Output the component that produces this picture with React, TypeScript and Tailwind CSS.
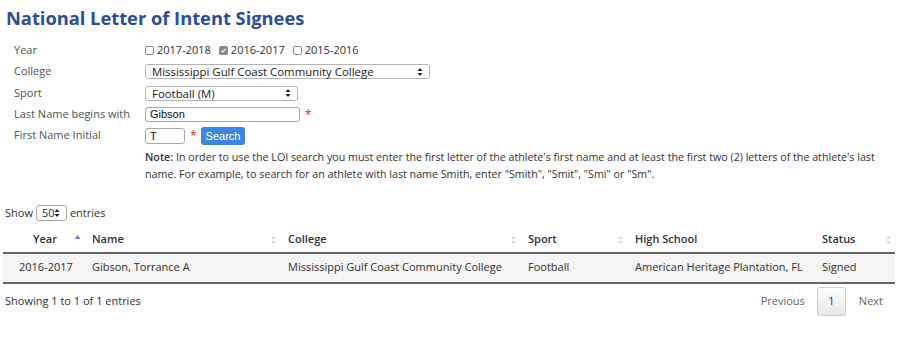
import React from 'react';

const font = { fontFamily: '"Open Sans", "Liberation Sans", sans-serif' };

function SortIcon({ dir }: { dir?: 'asc' }) {
  if (dir === 'asc') {
    return (
      <svg width="7" height="10" viewBox="0 0 7 10" className="absolute right-[3px] top-1/2 -translate-y-[60%]">
        <path d="M3.5 1 L6.5 5 L0.5 5 Z" fill="#7c7ee6" />
      </svg>
    );
  }
  return (
    <svg width="7" height="10" viewBox="0 0 7 10" className="absolute right-[3px] top-1/2 -translate-y-1/2">
      <path d="M3.5 0.5 L6 4 L1 4 Z" fill="#dcdcdc" />
      <path d="M3.5 9.5 L6 6 L1 6 Z" fill="#dcdcdc" />
    </svg>
  );
}

function SelectArrows() {
  return (
    <svg width="6" height="9" viewBox="0 0 6 9" className="absolute right-1.5 top-1/2 -translate-y-1/2">
      <path d="M3 0.5 L5.5 3.5 L0.5 3.5 Z" fill="#222" />
      <path d="M3 8.5 L5.5 5.5 L0.5 5.5 Z" fill="#222" />
    </svg>
  );
}

function FakeSelect({ value, width }: { value: string; width: string }) {
  return (
    <div
      className={`relative h-[15px] ${width} rounded-[3px] border border-[#b5b5b5] bg-white pl-[6px] text-[11.4px] leading-[13px] text-[#222]`}
    >
      {value}
      <SelectArrows />
    </div>
  );
}

function Checkbox({ checked, label }: { checked?: boolean; label: string }) {
  return (
    <label className="flex items-center gap-[3px]">
      <span
        className={`flex h-[9px] w-[9px] items-center justify-center rounded-[2px] border ${
          checked ? 'border-[#8a8a8a] bg-[#8a8a8a]' : 'border-[#8a8a8a] bg-white'
        }`}
      >
        {checked && (
          <svg width="7" height="7" viewBox="0 0 7 7">
            <path d="M1.3 3.6 L2.8 5 L5.7 1.8" stroke="#fff" strokeWidth="1.2" fill="none" />
          </svg>
        )}
      </span>
      <span>{label}</span>
    </label>
  );
}

const Star = () => <span className="ml-[5px] text-[12px] leading-none text-[#e0262b]">*</span>;

const columns = [
  { name: 'Year', w: 'w-[81px]', pad: 'pl-[30px]', sort: 'asc' as const },
  { name: 'Name', w: 'w-[196px]', pad: 'pl-2' },
  { name: 'College', w: 'w-[240px]', pad: 'pl-2' },
  { name: 'Sport', w: 'w-[107px]', pad: 'pl-2' },
  { name: 'High School', w: 'w-[187px]', pad: 'pl-2', nosort: true },
  { name: 'Status', w: 'w-[81px]', pad: 'pl-2' },
];

const row = ['2016-2017', 'Gibson, Torrance A', 'Mississippi Gulf Coast Community College', 'Football', 'American Heritage Plantation, FL', 'Signed'];

export default function App() {
  return (
    <div className="min-h-[355px] w-[904px] bg-white text-[#333]" style={font}>
      {/* Title */}
      <h1 className="pl-[6px] pt-[5px] text-[18.3px] font-bold leading-[26px] text-[#2b4d9c]">
        National Letter of Intent Signees
      </h1>

      {/* Search form */}
      <div className="mt-[9px] grid grid-cols-[131px_1fr] pl-[14px] text-[11px] text-[#555]">
        <div className="flex h-[21px] items-center">Year</div>
        <div className="flex h-[21px] items-center gap-[8px] text-[#333]">
          <Checkbox label="2017-2018" />
          <Checkbox checked label="2016-2017" />
          <Checkbox label="2015-2016" />
        </div>

        <div className="flex h-[21px] items-center">College</div>
        <div className="flex h-[21px] items-center">
          <FakeSelect value="Mississippi Gulf Coast Community College" width="w-[285px]" />
        </div>

        <div className="flex h-[22px] items-center">Sport</div>
        <div className="flex h-[22px] items-center">
          <FakeSelect value="Football (M)" width="w-[153px]" />
        </div>

        <div className="flex h-[21px] items-center">Last Name begins with</div>
        <div className="flex h-[21px] items-center">
          <div
            className="h-[15px] w-[155px] rounded-[3px] border border-[#aaa] bg-white pl-[4px] text-[11px] leading-[13px] text-[#111]"
            style={{ fontFamily: '"Liberation Sans", Arial, sans-serif' }}
          >
            Gibson
          </div>
          <Star />
        </div>

        <div className="flex h-[21px] items-center">First Name Initial</div>
        <div className="flex h-[21px] items-center">
          <div
            className="h-[16px] w-[40px] rounded-[3px] border border-[#aaa] bg-white pl-[4px] text-[11px] leading-[14px] text-[#111]"
            style={{ fontFamily: '"Liberation Sans", Arial, sans-serif' }}
          >
            T
          </div>
          <Star />
          <button
            className="ml-[4px] h-[18px] rounded-[3px] bg-[#3b88e3] px-[5px] text-[11px] leading-[18px] text-white"
            style={{ fontFamily: '"Liberation Sans", Arial, sans-serif' }}
          >
            Search
          </button>
        </div>

        <div />
        <p className="mt-[3px] w-[745px] text-[10.7px] leading-[17px] text-[#333]">
          <b className="font-semibold">Note:</b> In order to use the LOI search you must enter the first letter of the
          athlete's first name and at least the first two (2) letters of the athlete's last name. For example, to
          search for an athlete with last name Smith, enter "Smith", "Smit", "Smi" or "Sm".
        </p>
      </div>

      {/* Length selector */}
      <div className="mt-[22px] flex items-center pl-[5px] text-[11px] text-[#333]">
        Show
        <div className="relative mx-[3px] h-[16px] w-[31px] rounded-[3px] border border-[#aaa] pl-[5px] leading-[14px]">
          50
          <SelectArrows />
        </div>
        entries
      </div>

      {/* Table */}
      <table className="ml-[3px] mt-[6px] w-[892px] table-fixed border-collapse text-[11px] text-[#333]">
        <thead>
          <tr className="border-b-2 border-[#666]">
            {columns.map((c) => (
              <th key={c.name} className={`relative ${c.w} ${c.pad} h-[25px] text-left font-semibold`}>
                {c.name}
                {!c.nosort && <SortIcon dir={c.sort} />}
              </th>
            ))}
          </tr>
        </thead>
        <tbody>
          <tr className="border-b-2 border-[#666] bg-[#f5f5f5]">
            {row.map((v, i) => (
              <td key={i} className={`h-[30px] ${i === 0 ? 'pl-4' : 'pl-2'}`}>
                {v}
              </td>
            ))}
          </tr>
        </tbody>
      </table>

      {/* Footer */}
      <div className="ml-[5px] mt-[3px] flex w-[888px] items-center justify-between text-[11px] text-[#333]">
        <span>Showing 1 to 1 of 1 entries</span>
        <div className="flex items-center">
          <span className="px-[8px] text-[#666]">Previous</span>
          <span className="mx-[4px] flex h-[29px] w-[29px] items-center justify-center rounded-[2px] border border-[#d0d0d0] bg-gradient-to-b from-white to-[#e6e6e6] text-[#333]">
            1
          </span>
          <span className="pl-[9px] pr-[10px] text-[#666]">Next</span>
        </div>
      </div>
    </div>
  );
}
